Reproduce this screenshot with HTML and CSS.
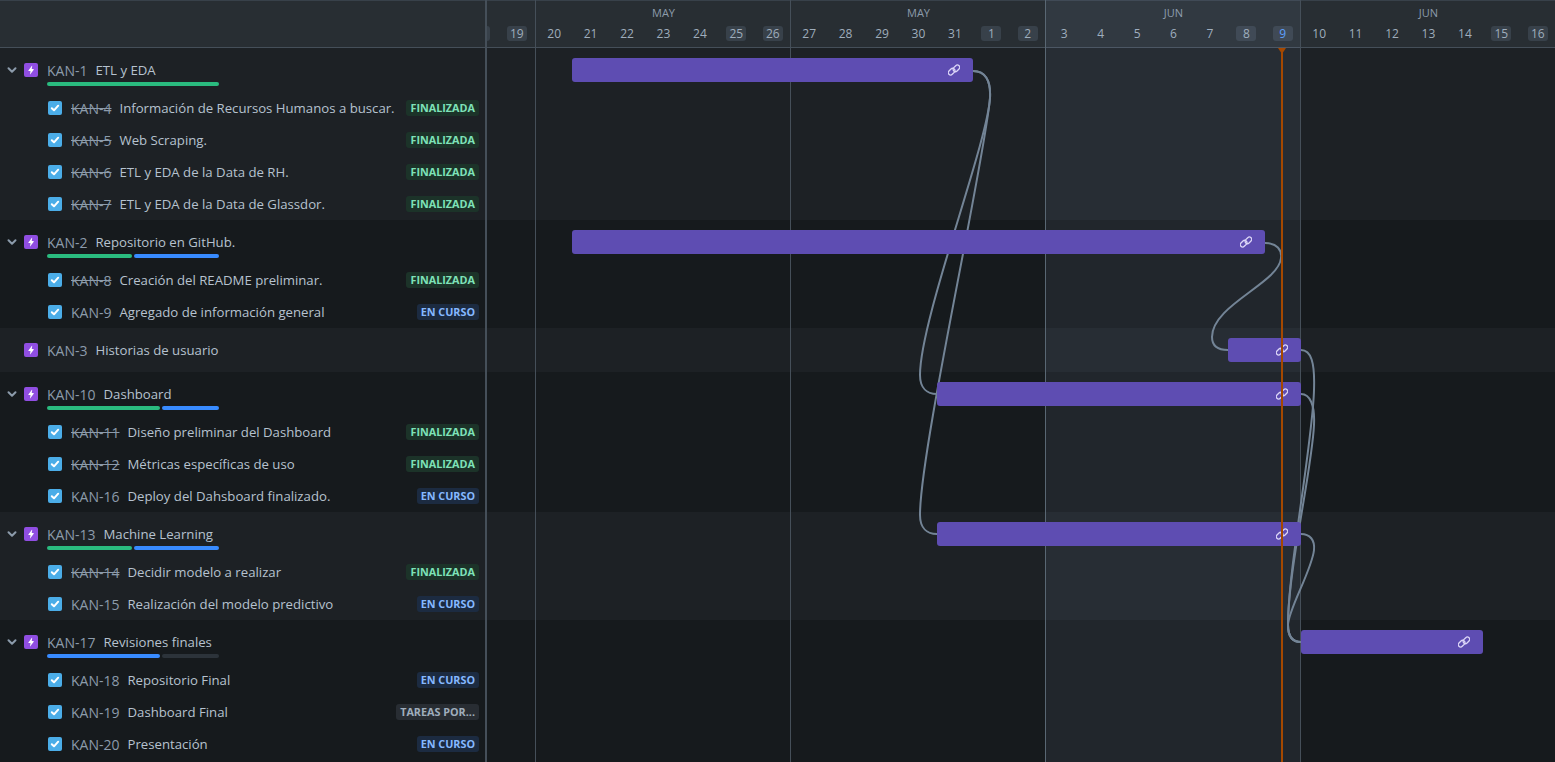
FILE: index.html
```html
<!DOCTYPE html>
<html lang="en">
<head>
  <meta charset="UTF-8">
  <title>Cronograma KAN</title>
  <link rel="stylesheet" href="styles.css">
</head>
<body>
  <svg class="defs" width="0" height="0">
    <symbol id="chevron" viewBox="0 0 12 12"><path d="M2.5 4.2 6 7.7l3.5-3.5" fill="none" stroke="currentColor" stroke-width="2" stroke-linecap="round" stroke-linejoin="round"/></symbol>
    <symbol id="epic" viewBox="0 0 14 14"><rect width="14" height="14" rx="2" fill="#904EE2"/><path d="M7.9 2.8 4.4 7.4c-.2.3 0 .6.3.6h1.8l-.5 3.2c0 .2.2.3.3.1l3.4-4.6c.2-.3 0-.6-.3-.6H7.7l.5-3.2c0-.2-.2-.3-.3-.1z" fill="#fff"/></symbol>
    <symbol id="task" viewBox="0 0 14 14"><rect width="14" height="14" rx="2" fill="#4BADE8"/><path d="M3.8 7.2 6 9.3l4.2-4.6" fill="none" stroke="#fff" stroke-width="2" stroke-linecap="round" stroke-linejoin="round"/></symbol>
    <symbol id="link" viewBox="0 0 12 12"><g fill="none" stroke="currentColor" stroke-width="1.3"><rect x="-.1" y="5.4" width="7.4" height="4.6" rx="2.3" transform="rotate(-45 3.6 7.7)"/><rect x="4.7" y="2" width="7.4" height="4.6" rx="2.3" transform="rotate(-45 8.4 4.3)"/></g></symbol>
  </svg>

  <div class="chart">
    <header class="head">
      <div class="head-side"></div>
      <div class="week week-first">
        <div class="days">
          <span class="day"><b class="off"></b></span>
          <span class="day"><b class="off">19</b></span>
        </div>
      </div>
      <div class="week">
        <div class="month">MAY</div>
        <div class="days">
          <span class="day"><b>20</b></span><span class="day"><b>21</b></span><span class="day"><b>22</b></span><span class="day"><b>23</b></span><span class="day"><b>24</b></span><span class="day"><b class="off">25</b></span><span class="day"><b class="off">26</b></span>
        </div>
      </div>
      <div class="week">
        <div class="month">MAY</div>
        <div class="days">
          <span class="day"><b>27</b></span><span class="day"><b>28</b></span><span class="day"><b>29</b></span><span class="day"><b>30</b></span><span class="day"><b>31</b></span><span class="day"><b class="off">1</b></span><span class="day"><b class="off">2</b></span>
        </div>
      </div>
      <div class="week">
        <div class="month">JUN</div>
        <div class="days">
          <span class="day"><b>3</b></span><span class="day"><b>4</b></span><span class="day"><b>5</b></span><span class="day"><b>6</b></span><span class="day"><b>7</b></span><span class="day"><b class="off">8</b></span><span class="day"><b class="off current">9</b></span>
        </div>
      </div>
      <div class="week">
        <div class="month">JUN</div>
        <div class="days">
          <span class="day"><b>10</b></span><span class="day"><b>11</b></span><span class="day"><b>12</b></span><span class="day"><b>13</b></span><span class="day"><b>14</b></span><span class="day"><b class="off">15</b></span><span class="day"><b class="off">16</b></span>
        </div>
      </div>
    </header>

    <section class="group">
      <div class="row row-epic">
        <div class="side">
          <div class="line">
            <svg class="chev"><use href="#chevron"/></svg>
            <svg class="ico"><use href="#epic"/></svg>
            <span class="key">KAN-1</span><span class="name">ETL y EDA</span>
          </div>
          <div class="progress"><i class="seg green grow-1"></i></div>
        </div>
        <div class="track"><div class="bar" style="margin-left:86px;width:401px"><svg class="lnk"><use href="#link"/></svg></div></div>
      </div>
      <div class="row row-task"><div class="side"><svg class="ico"><use href="#task"/></svg><span class="key done">KAN-4</span><span class="name">Información de Recursos Humanos a buscar.</span><span class="loz loz-done">FINALIZADA</span></div></div>
      <div class="row row-task"><div class="side"><svg class="ico"><use href="#task"/></svg><span class="key done">KAN-5</span><span class="name">Web Scraping.</span><span class="loz loz-done">FINALIZADA</span></div></div>
      <div class="row row-task"><div class="side"><svg class="ico"><use href="#task"/></svg><span class="key done">KAN-6</span><span class="name">ETL y EDA de la Data de RH.</span><span class="loz loz-done">FINALIZADA</span></div></div>
      <div class="row row-task"><div class="side"><svg class="ico"><use href="#task"/></svg><span class="key done">KAN-7</span><span class="name">ETL y EDA de la Data de Glassdor.</span><span class="loz loz-done">FINALIZADA</span></div></div>
    </section>

    <section class="group sunken">
      <div class="row row-epic">
        <div class="side">
          <div class="line">
            <svg class="chev"><use href="#chevron"/></svg>
            <svg class="ico"><use href="#epic"/></svg>
            <span class="key">KAN-2</span><span class="name">Repositorio en GitHub.</span>
          </div>
          <div class="progress"><i class="seg green grow-1"></i><i class="seg blue grow-1"></i></div>
        </div>
        <div class="track"><div class="bar" style="margin-left:86px;width:693px"><svg class="lnk"><use href="#link"/></svg></div></div>
      </div>
      <div class="row row-task"><div class="side"><svg class="ico"><use href="#task"/></svg><span class="key done">KAN-8</span><span class="name">Creación del README preliminar.</span><span class="loz loz-done">FINALIZADA</span></div></div>
      <div class="row row-task"><div class="side"><svg class="ico"><use href="#task"/></svg><span class="key">KAN-9</span><span class="name">Agregado de información general</span><span class="loz loz-prog">EN CURSO</span></div></div>
    </section>

    <section class="group">
      <div class="row row-epic">
        <div class="side">
          <div class="line">
            <span class="chev"></span>
            <svg class="ico"><use href="#epic"/></svg>
            <span class="key">KAN-3</span><span class="name">Historias de usuario</span>
          </div>
        </div>
        <div class="track"><div class="bar" style="margin-left:742px;width:73px"><svg class="lnk"><use href="#link"/></svg></div></div>
      </div>
    </section>

    <section class="group sunken">
      <div class="row row-epic">
        <div class="side">
          <div class="line">
            <svg class="chev"><use href="#chevron"/></svg>
            <svg class="ico"><use href="#epic"/></svg>
            <span class="key">KAN-10</span><span class="name">Dashboard</span>
          </div>
          <div class="progress"><i class="seg green grow-2"></i><i class="seg blue grow-1"></i></div>
        </div>
        <div class="track"><div class="bar" style="margin-left:451px;width:364px"><svg class="lnk"><use href="#link"/></svg></div></div>
      </div>
      <div class="row row-task"><div class="side"><svg class="ico"><use href="#task"/></svg><span class="key done">KAN-11</span><span class="name">Diseño preliminar del Dashboard</span><span class="loz loz-done">FINALIZADA</span></div></div>
      <div class="row row-task"><div class="side"><svg class="ico"><use href="#task"/></svg><span class="key done">KAN-12</span><span class="name">Métricas específicas de uso</span><span class="loz loz-done">FINALIZADA</span></div></div>
      <div class="row row-task"><div class="side"><svg class="ico"><use href="#task"/></svg><span class="key">KAN-16</span><span class="name">Deploy del Dahsboard finalizado.</span><span class="loz loz-prog">EN CURSO</span></div></div>
    </section>

    <section class="group">
      <div class="row row-epic">
        <div class="side">
          <div class="line">
            <svg class="chev"><use href="#chevron"/></svg>
            <svg class="ico"><use href="#epic"/></svg>
            <span class="key">KAN-13</span><span class="name">Machine Learning</span>
          </div>
          <div class="progress"><i class="seg green grow-1"></i><i class="seg blue grow-1"></i></div>
        </div>
        <div class="track"><div class="bar" style="margin-left:451px;width:364px"><svg class="lnk"><use href="#link"/></svg></div></div>
      </div>
      <div class="row row-task"><div class="side"><svg class="ico"><use href="#task"/></svg><span class="key done">KAN-14</span><span class="name">Decidir modelo a realizar</span><span class="loz loz-done">FINALIZADA</span></div></div>
      <div class="row row-task"><div class="side"><svg class="ico"><use href="#task"/></svg><span class="key">KAN-15</span><span class="name">Realización del modelo predictivo</span><span class="loz loz-prog">EN CURSO</span></div></div>
    </section>

    <section class="group sunken">
      <div class="row row-epic">
        <div class="side">
          <div class="line">
            <svg class="chev"><use href="#chevron"/></svg>
            <svg class="ico"><use href="#epic"/></svg>
            <span class="key">KAN-17</span><span class="name">Revisiones finales</span>
          </div>
          <div class="progress"><i class="seg blue grow-2"></i><i class="seg grey grow-1"></i></div>
        </div>
        <div class="track"><div class="bar" style="margin-left:815px;width:182px"><svg class="lnk"><use href="#link"/></svg></div></div>
      </div>
      <div class="row row-task"><div class="side"><svg class="ico"><use href="#task"/></svg><span class="key">KAN-18</span><span class="name">Repositorio Final</span><span class="loz loz-prog">EN CURSO</span></div></div>
      <div class="row row-task"><div class="side"><svg class="ico"><use href="#task"/></svg><span class="key">KAN-19</span><span class="name">Dashboard Final</span><span class="loz loz-todo">TAREAS POR...</span></div></div>
      <div class="row row-task"><div class="side"><svg class="ico"><use href="#task"/></svg><span class="key">KAN-20</span><span class="name">Presentación</span><span class="loz loz-prog">EN CURSO</span></div></div>
    </section>

    <!-- week columns and today marker sit over the rows -->
    <div class="columns">
      <div class="col col-first"></div>
      <div class="col"></div>
      <div class="col"></div>
      <div class="col col-current"></div>
      <div class="col"></div>
    </div>

    <svg class="links" viewBox="0 0 1555 762">
      <path d="M973 71C985 71 991 80 990 98C987 145 920 320 920 375C920 388 927 394 937 394"/>
      <path d="M973 71C985 71 991 80 990 98C985 160 920 450 920 515C920 528 927 534 937 534"/>
      <path d="M1265 243C1277 243 1282 250 1281 258C1279 283 1212 305 1212 337C1212 346 1218 350 1228 350"/>
      <path d="M1301 350C1311 350 1315 362 1314 390C1313 440 1288 570 1288 625C1288 636 1292 642 1301 642"/>
      <path d="M1301 394C1310 394 1315 405 1314 425C1312 470 1288 570 1288 625C1288 636 1292 642 1301 642"/>
      <path d="M1301 534C1310 534 1315 540 1314 550C1312 570 1288 610 1288 625C1288 636 1292 642 1301 642"/>
    </svg>

    <div class="now-line"></div>
  </div>
</body>
</html>
```

FILE: styles.css
```css
* {
  box-sizing: border-box;
}
html, body {
  margin: 0;
  height: 100%;
  overflow: hidden;
}
body {
  background: #161a1d;
  color: #b6c2cf;
  font-family: "Open Sans", "Noto Sans", sans-serif;
  font-size: 13.2px;
}
.defs {
  position: absolute;
}
.chart {
  position: relative;
  height: 762px;
}

/* header */
.head {
  display: flex;
  height: 48px;
  background: #282e33;
  border-top: 1px solid #38414a;
  border-bottom: 1px solid #454f59;
}
.head-side {
  width: 487px;
  flex: none;
}
.week {
  flex: none;
  width: 256px;
  margin-right: -1px;
  padding-left: 1px;
  display: flex;
  flex-direction: column;
  justify-content: flex-end;
}
.week-first {
  width: 48px;
  margin-right: 0;
  padding-left: 0;
  overflow: hidden;
  align-items: flex-end;
}
.week-first .days {
  flex: none;
  width: 72.86px;
  grid-template-columns: repeat(2, 1fr);
}
.month {
  text-align: center;
  color: #8c9bab;
  font-size: 11px;
  line-height: 16px;
  margin-bottom: 5px;
}
.days {
  display: grid;
  grid-template-columns: repeat(7, 1fr);
  margin-bottom: 6px;
}
.day {
  display: flex;
  justify-content: center;
}
.day b {
  min-width: 20px;
  height: 15px;
  line-height: 15px;
  text-align: center;
  font-weight: 400;
  font-size: 12px;
  color: #9fadbc;
  border-radius: 3px;
}
.day .off {
  background: #38414a;
}
.day .current {
  color: #579dff;
}

/* rows */
.group {
  background: #1d2125;
}
.group.sunken {
  background: #161a1d;
}
.row {
  display: flex;
}
.row-epic {
  height: 44px;
}
.row-task {
  height: 32px;
}
.side {
  width: 486px;
  flex: none;
}
.row-epic .side {
  padding-top: 12px;
}
.row-task .side {
  display: flex;
  align-items: center;
  padding: 0 7px 0 48px;
}
.line {
  display: flex;
  align-items: center;
  height: 20px;
  padding-left: 6px;
}
.chev {
  width: 12px;
  height: 12px;
  margin-right: 6px;
  color: #8c9bab;
}
.ico {
  width: 14px;
  height: 14px;
  flex: none;
  margin-right: 9px;
}
.key {
  color: #8c9bab;
  font-size: 14px;
  margin-right: 8px;
  white-space: nowrap;
}
.key.done {
  text-decoration: line-through;
}
.name {
  white-space: nowrap;
}
.loz {
  margin-left: auto;
  height: 16px;
  line-height: 16px;
  padding: 0 4px;
  border-radius: 3px;
  font-size: 10.8px;
  font-weight: 700;
  white-space: nowrap;
}
.loz-done {
  background: #1c3329;
  color: #7ee2b8;
}
.loz-prog {
  background: #1c2b41;
  color: #85b8ff;
}
.loz-todo {
  background: #282d33;
  color: #9fadbc;
}
.progress {
  display: flex;
  gap: 2px;
  width: 172px;
  height: 4px;
  margin: 2px 0 0 47px;
}
.seg {
  border-radius: 2px;
}
.grow-1 {
  flex: 1;
}
.grow-2 {
  flex: 2;
}
.green {
  background: #2abb7f;
}
.blue {
  background: #388bff;
}
.grey {
  background: #2c333a;
}

/* timeline */
.track {
  flex: 1;
  padding-top: 10px;
}
.bar {
  position: relative;
  z-index: 3;
  height: 24px;
  background: #5e4db2;
  border-radius: 3px;
  display: flex;
  align-items: center;
  justify-content: flex-end;
  padding-right: 13px;
  color: #dcd6f7;
}
.lnk {
  width: 12px;
  height: 12px;
}
.columns {
  position: absolute;
  z-index: 1;
  top: 0;
  bottom: 0;
  left: 485px;
  right: 0;
  display: flex;
  pointer-events: none;
}
.col {
  width: 255px;
  border-left: 1px solid #454f59;
}
.col-first {
  width: 50px;
  border-left-width: 2px;
}
.col-current {
  background: rgba(166, 197, 226, 0.08);
  border-right: 1px solid #596773;
  border-left-color: #596773;
  width: 256px;
  margin-right: -1px;
}
.links {
  position: absolute;
  z-index: 2;
  top: 0;
  left: 0;
  width: 1555px;
  height: 762px;
  fill: none;
  stroke: #738496;
  stroke-width: 2;
}
.now-line {
  position: absolute;
  z-index: 4;
  top: 48px;
  bottom: 0;
  left: 1281px;
  width: 2px;
  background: #a54800;
}
.now-line::before {
  content: "";
  position: absolute;
  top: 0;
  left: -3px;
  border-style: solid;
  border-width: 6px 4px 0;
  border-color: #a54800 transparent transparent;
}
```
